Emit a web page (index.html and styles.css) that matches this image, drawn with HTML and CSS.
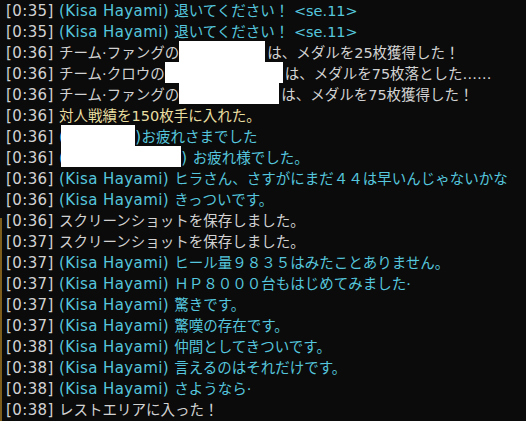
FILE: index.html
```html
<!DOCTYPE html>
<html lang="ja">
<head>
    <meta charset="UTF-8">
    <meta name="viewport" content="width=device-width, initial-scale=1.0">
    <title>チャットログ</title>
    <link rel="stylesheet" href="styles.css">
</head>
<body>
    <div class="log">
        <p class="line say"><span class="time">[0:35]</span> <span class="name">(Kisa Hayami)</span> <span class="msg">退いてください！ &lt;se.11&gt;</span></p>
        <p class="line say"><span class="time">[0:35]</span> <span class="name">(Kisa Hayami)</span> <span class="msg">退いてください！ &lt;se.11&gt;</span></p>
        <p class="line sys"><span class="time">[0:36]</span> <span class="msg">チーム·ファングの<span class="redact w1"></span>は、メダルを25枚獲得した！</span></p>
        <p class="line sys"><span class="time">[0:36]</span> <span class="msg">チーム·クロウの<span class="redact w2"></span>は、メダルを75枚落とした……</span></p>
        <p class="line sys"><span class="time">[0:36]</span> <span class="msg">チーム·ファングの<span class="redact w3"></span>は、メダルを75枚獲得した！</span></p>
        <p class="line gain"><span class="time">[0:36]</span> <span class="msg">対人戦績を150枚手に入れた。</span></p>
        <p class="line say"><span class="time">[0:36]</span> <span class="name">(<span class="redact w4"></span>)</span><span class="msg">お疲れさまでした</span></p>
        <p class="line say"><span class="time">[0:36]</span> <span class="name">(<span class="redact w5"></span>)</span> <span class="msg">お疲れ様でした。</span></p>
        <p class="line say"><span class="time">[0:36]</span> <span class="name">(Kisa Hayami)</span> <span class="msg">ヒラさん、さすがにまだ４４は早いんじゃないかな</span></p>
        <p class="line say"><span class="time">[0:36]</span> <span class="name">(Kisa Hayami)</span> <span class="msg">きっついです。</span></p>
        <p class="line sys"><span class="time">[0:36]</span> <span class="msg">スクリーンショットを保存しました。</span></p>
        <p class="line sys"><span class="time">[0:37]</span> <span class="msg">スクリーンショットを保存しました。</span></p>
        <p class="line say"><span class="time">[0:37]</span> <span class="name">(Kisa Hayami)</span> <span class="msg">ヒール量９８３５はみたことありません。</span></p>
        <p class="line say"><span class="time">[0:37]</span> <span class="name">(Kisa Hayami)</span> <span class="msg">ＨＰ８０００台もはじめてみました·</span></p>
        <p class="line say"><span class="time">[0:37]</span> <span class="name">(Kisa Hayami)</span> <span class="msg">驚きです。</span></p>
        <p class="line say"><span class="time">[0:37]</span> <span class="name">(Kisa Hayami)</span> <span class="msg">驚嘆の存在です。</span></p>
        <p class="line say"><span class="time">[0:38]</span> <span class="name">(Kisa Hayami)</span> <span class="msg">仲間としてきついです。</span></p>
        <p class="line say"><span class="time">[0:38]</span> <span class="name">(Kisa Hayami)</span> <span class="msg">言えるのはそれだけです。</span></p>
        <p class="line say"><span class="time">[0:38]</span> <span class="name">(Kisa Hayami)</span> <span class="msg">さようなら·</span></p>
        <p class="line sys"><span class="time">[0:38]</span> <span class="msg">レストエリアに入った！</span></p>
    </div>
</body>
</html>
```

FILE: styles.css
```css
body {
    margin: 0;
    background-color: #0b0b0b;
    height: 421px;
    overflow: hidden;
    position: relative;
}

/* Borde dorado de la ventana (parte inferior izquierda) */
body::before {
    content: "";
    position: absolute;
    left: 0;
    top: 218px;
    bottom: 0;
    width: 2px;
    background-color: #7d5e1c;
}

.log {
    padding: 1px 0 0 6px;
}

.line {
    margin: 0;
    height: 21px;
    line-height: 21px;
    white-space: nowrap;
    font-family: "DejaVu Sans", "Noto Sans CJK JP", sans-serif;
    font-size: 15px;
    letter-spacing: 0.4px;
    color: #d2d2d2;
}

.time {
    color: #d2d2d2;
}

.msg {
    font-size: 14.5px;
    letter-spacing: 0;
}

.say .name,
.say .msg {
    color: #55c6dd;
}

.gain .msg {
    color: #e8dea0;
}

/* Nombres tapados */
.redact {
    display: inline-block;
    height: 21px;
    margin-top: -2px;
    vertical-align: top;
    background-color: #ffffff;
}

.name .redact {
    margin-left: -4px;
}

.msg .redact {
    margin-right: 2px;
}

.w1 { width: 86px; }
.w2 { width: 118px; }
.w3 { width: 100px; }
.w4 { width: 74px; }
.w5 { width: 120px; }
```
